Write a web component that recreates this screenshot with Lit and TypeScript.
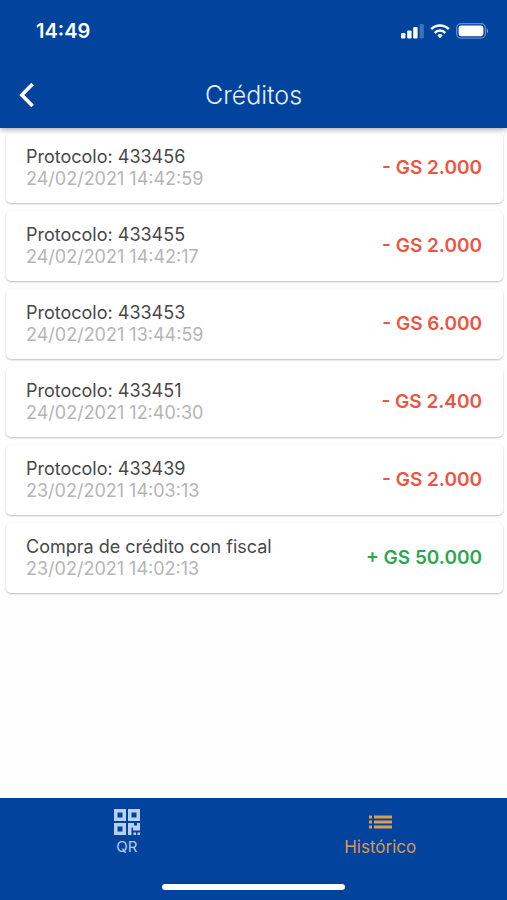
import { LitElement, html, css, svg } from "lit";
import { customElement, property } from "lit/decorators.js";

interface Movement {
  title: string;
  date: string;
  amount: string;
  credit?: boolean;
}

const MOVEMENTS: Movement[] = [
  { title: "Protocolo: 433456", date: "24/02/2021 14:42:59", amount: "- GS 2.000" },
  { title: "Protocolo: 433455", date: "24/02/2021 14:42:17", amount: "- GS 2.000" },
  { title: "Protocolo: 433453", date: "24/02/2021 13:44:59", amount: "- GS 6.000" },
  { title: "Protocolo: 433451", date: "24/02/2021 12:40:30", amount: "- GS 2.400" },
  { title: "Protocolo: 433439", date: "23/02/2021 14:03:13", amount: "- GS 2.000" },
  { title: "Compra de crédito con fiscal", date: "23/02/2021 14:02:13", amount: "+ GS 50.000", credit: true },
];

@customElement("status-bar")
class StatusBar extends LitElement {
  static styles = css`
    :host {
      display: flex;
      justify-content: space-between;
      align-items: center;
      height: 62px;
      padding: 0 18px 0 36px;
      color: #fff;
    }
    .time {
      font-size: 20px;
      line-height: 24px;
      font-weight: 600;
    }
    .icons {
      display: flex;
      align-items: center;
      gap: 6px;
    }
    svg {
      display: block;
    }
  `;

  render() {
    return html`
      <span class="time">14:49</span>
      <span class="icons">
        <svg width="23" height="16" viewBox="0 0 23 16" fill="#fff" aria-hidden="true">
          <rect x="0" y="10" width="4.4" height="5.5" rx="1.2" />
          <rect x="6.2" y="7.4" width="4.4" height="8.1" rx="1.2" />
          <rect x="12.2" y="4" width="4.4" height="11.5" rx="1.2" />
          <rect x="18.6" y="1" width="4.2" height="14.5" rx="1.2" opacity=".25" />
        </svg>
        <svg width="20" height="16" viewBox="0 0 20 16" fill="none" stroke="#fff" stroke-width="2.5" aria-hidden="true">
          <path d="M1.2 6.2a12.4 12.4 0 0 1 17.6 0" />
          <path d="M4.7 9.8a7.5 7.5 0 0 1 10.6 0" />
          <path d="M10 15.2l-2.8-2.9a4 4 0 0 1 5.6 0z" fill="#fff" stroke="none" />
        </svg>
        <svg width="33" height="16" viewBox="0 0 33 16" aria-hidden="true">
          <rect x=".6" y=".6" width="28.8" height="14.6" rx="4.4" fill="none" stroke="#fff" stroke-opacity=".4" stroke-width="1.2" />
          <rect x="2.6" y="2.6" width="24.8" height="10.6" rx="2.4" fill="#fff" />
          <path d="M30.8 5.6c1.8.8 1.8 3.8 0 4.6z" fill="#fff" fill-opacity=".5" />
        </svg>
      </span>
    `;
  }
}

@customElement("movement-card")
class MovementCard extends LitElement {
  @property({ attribute: false }) movement!: Movement;

  static styles = css`
    :host {
      display: flex;
      justify-content: space-between;
      align-items: center;
      gap: 16px;
      padding: 13px 21px 13px 20px;
      border-radius: 5px;
      background: #fff;
      box-shadow: 0 1px 2px rgba(0, 0, 0, 0.25);
    }
    .title,
    .date {
      margin: 0;
      font-size: 18px;
      line-height: 22px;
      font-weight: 400;
    }
    .title {
      color: #484848;
    }
    .date {
      color: #b5b5b5;
    }
    .amount {
      flex: none;
      font-size: 19px;
      line-height: 22px;
      font-weight: 600;
      color: #ee5442;
    }
    .amount.credit {
      color: #2ba84f;
    }
  `;

  render() {
    const m = this.movement;
    return html`
      <div>
        <h2 class="title">${m.title}</h2>
        <p class="date">${m.date}</p>
      </div>
      <span class="amount ${m.credit ? "credit" : ""}">${m.amount}</span>
    `;
  }
}

@customElement("app-root")
class AppRoot extends LitElement {
  static styles = css`
    :host {
      display: flex;
      flex-direction: column;
      min-height: 100vh;
      background: #fefefe;
      font-family: Inter, "Liberation Sans", sans-serif;
    }
    .top {
      position: relative;
      background: #01439d;
      box-shadow: 0 1px 6px rgba(0, 0, 0, 0.4);
    }
    .bar {
      display: grid;
      grid-template-columns: 56px 1fr 56px;
      align-items: center;
      height: 66px;
    }
    button {
      display: flex;
      flex-direction: column;
      align-items: center;
      margin: 0;
      border: 0;
      background: none;
      font-family: inherit;
      cursor: pointer;
    }
    .back {
      padding: 12px 19px;
      align-items: flex-start;
    }
    h1 {
      margin: 0;
      font-size: 25px;
      line-height: 30px;
      font-weight: 300;
      color: #e6f0ff;
      text-align: center;
    }
    main {
      flex: 1;
      display: flex;
      flex-direction: column;
      gap: 8px;
      padding: 5px 4px 8px 6px;
    }
    footer {
      background: #01439d;
      padding-bottom: 10px;
    }
    nav {
      display: grid;
      grid-template-columns: 1fr 1fr;
      height: 86px;
    }
    .tab {
      padding: 10px 0 0;
      font-size: 17px;
      line-height: 22px;
      color: #d99a55;
    }
    .tab.small {
      font-size: 15px;
      color: #b5cbea;
    }
    .home {
      width: 36%;
      height: 6px;
      margin: 0 auto;
      border-radius: 3px;
      background: #fff;
    }
    svg {
      display: block;
    }
  `;

  private finder(x: number, y: number) {
    return svg`<path fill-rule="evenodd" d="M${x} ${y}h12v12h-12zM${x + 3.5} ${y + 3.5}v5h5v-5z" />`;
  }

  render() {
    return html`
      <header class="top">
        <status-bar></status-bar>
        <div class="bar">
          <button class="back" aria-label="Volver">
            <svg width="16" height="26" viewBox="0 0 16 26" fill="none" stroke="#fff" stroke-width="3.6">
              <path d="M13.6 2L2.8 13l10.8 11" />
            </svg>
          </button>
          <h1>Créditos</h1>
        </div>
      </header>
      <main>${MOVEMENTS.map((m) => html`<movement-card .movement=${m}></movement-card>`)}</main>
      <footer>
        <nav>
          <button class="tab small">
            <svg width="28" height="28" viewBox="0 0 28 28" fill="#b9d0f0" aria-hidden="true">
              ${this.finder(1, 1)}${this.finder(15, 1)}${this.finder(1, 15)}
              <path d="M15 15h6v2.500h3v-2.500h3v7.500h-7v-3h-1.500v7.500h-3.500zM20.500 24.500h2.500v2.500h-2.500zM24.500 24.500h2.500v2.500h-2.500z" />
            </svg>
            QR
          </button>
          <button class="tab" aria-current="page">
            <svg width="28" height="28" viewBox="0 0 28 28" fill="#dd9c50" aria-hidden="true">
              <path d="M3 7.500h3v3h-3zM8 7.500h18v3h-18zM3 12.500h3v3h-3zM8 12.500h18v3h-18zM3 17.500h3v3h-3zM8 17.500h18v3h-18z" />
            </svg>
            Histórico
          </button>
        </nav>
        <div class="home"></div>
      </footer>
    `;
  }
}
